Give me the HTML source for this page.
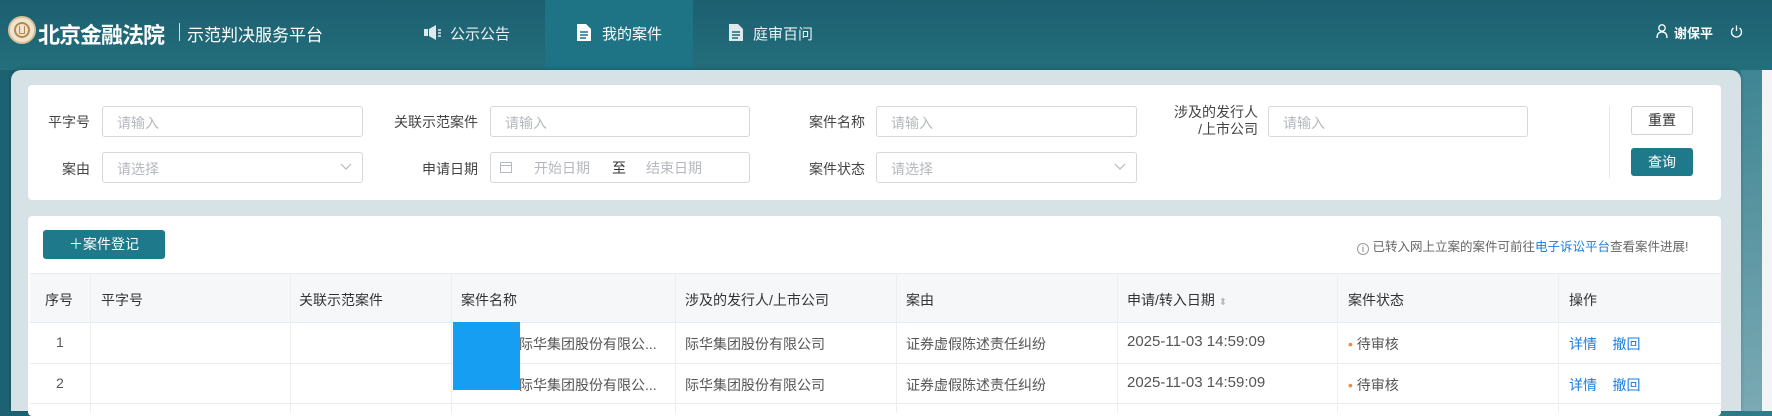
<!DOCTYPE html>
<html><head><meta charset="utf-8"><style>
*{margin:0;padding:0;box-sizing:border-box}
body{width:1772px;height:411px;overflow:hidden;font-family:"Liberation Sans","Noto Sans CJK SC",sans-serif;background:linear-gradient(90deg,#1c6272 0%,#236d7a 60%,#2e7c89 100%);position:relative;color:#333}
.abs{position:absolute}
.hdr{left:0;top:0;width:1772px;height:70px;background:linear-gradient(180deg,#1c5f70,#246f7c)}
.right{left:1741px;top:70px;width:31px;height:341px;background:linear-gradient(180deg,#3f8593,#7aaab4)}
.strip{left:1762px;top:70px;width:10px;height:341px;background:#f2f4f5}
.panel{left:11px;top:70px;width:1730px;height:341px;background:#d6e2e6;border-radius:10px 10px 0 0;box-shadow:0 -1px 4px rgba(0,0,0,.2)}
.card{background:#fff;border-radius:4px}
.lbl{font-size:14px;color:#444;text-align:right}
.inp{border:1px solid #d4d7dc;border-radius:3px;height:31px;font-size:14px;color:#b5b8be;padding:6px 14px;background:#fff}
.btn{border-radius:3px;font-size:14px;text-align:center}
.nav{color:#e8f1f3;font-size:15px}
.cell{position:absolute;font-size:14px;color:#555}
.hl{position:absolute;height:1px;background:#e8ebef}
.vl{position:absolute;width:1px;background:#eceef1}
.link{color:#1a7ee0}
</style></head><body>
<div class="abs hdr"></div>
<div class="abs right"></div>
<div class="abs strip"></div>
<div class="abs" style="left:8px;top:16px;width:28px;height:28px;border-radius:50%;background:#f1e4cf;border:2px solid #d9c09a"></div>
<div class="abs" style="left:14px;top:22px;width:16px;height:16px;border-radius:50%;border:2px solid #b48a50"></div>
<div class="abs" style="left:19px;top:26px;width:6px;height:8px;border:1.5px solid #b48a50;border-top:none"></div>
<div class="abs" style="left:38px;top:18px;font-size:22px;font-weight:bold;color:#fff;letter-spacing:-1px">北京金融法院</div>
<div class="abs" style="left:179px;top:23px;width:1px;height:18px;background:#cfe0e4"></div>
<div class="abs" style="left:187px;top:21px;font-size:17px;color:#fff">示范判决服务平台</div>
<div class="abs" style="left:545px;top:0;width:148px;height:70px;background:#1e7485"></div>
<svg class="abs" style="left:424px;top:25px" width="18" height="15" viewBox="0 0 18 15"><rect x="0" y="4" width="4" height="7" fill="#dfe9ec"/><path d="M5 4 L12 0 V15 L5 11Z" fill="#dfe9ec"/><path d="M14 5h3M14 8h3M14 11h3" stroke="#dfe9ec" stroke-width="1.5"/></svg>
<div class="abs nav" style="left:450px;top:23px">公示公告</div>
<svg class="abs" style="left:577px;top:24px" width="14" height="17" viewBox="0 0 14 17"><path d="M0 0h9l5 5v12H0z" fill="#fff"/><path d="M3 8h8M3 11h8M3 14h6" stroke="#1e7485" stroke-width="1.5"/></svg>
<div class="abs nav" style="left:602px;top:23px;color:#fff">我的案件</div>
<svg class="abs" style="left:729px;top:24px" width="14" height="17" viewBox="0 0 14 17"><path d="M0 0h9l5 5v12H0z" fill="#dfe9ec"/><path d="M3 8h8M3 11h8M3 14h6" stroke="#1f6a78" stroke-width="1.5"/></svg>
<div class="abs nav" style="left:753px;top:23px">庭审百问</div>
<svg class="abs" style="left:1656px;top:24px" width="12" height="14" viewBox="0 0 12 14"><circle cx="6" cy="4" r="3.2" fill="none" stroke="#fff" stroke-width="1.3"/><path d="M1 14 Q1 8 6 8 Q11 8 11 14" fill="none" stroke="#fff" stroke-width="1.3"/></svg>
<div class="abs" style="left:1674px;top:23px;font-size:13px;color:#fff;font-weight:bold">谢保平</div>
<svg class="abs" style="left:1730px;top:25px" width="13" height="13" viewBox="0 0 13 13"><path d="M3.5 3 A5 5 0 1 0 9.5 3" fill="none" stroke="#fff" stroke-width="1.3"/><path d="M6.5 0.5V6" stroke="#fff" stroke-width="1.3"/></svg>

<div class="abs panel"></div>
<div class="abs card" style="left:28px;top:85px;width:1693px;height:115px"></div>
<div class="abs lbl" style="left:20px;top:112px;width:70px">平字号</div>
<div class="abs inp" style="left:102px;top:106px;width:261px">请输入</div>
<div class="abs lbl" style="left:378px;top:112px;width:100px">关联示范案件</div>
<div class="abs inp" style="left:490px;top:106px;width:260px">请输入</div>
<div class="abs lbl" style="left:765px;top:112px;width:100px">案件名称</div>
<div class="abs inp" style="left:876px;top:106px;width:261px">请输入</div>
<div class="abs lbl" style="left:1158px;top:104px;width:100px;line-height:17px">涉及的发行人<br>/上市公司</div>
<div class="abs inp" style="left:1268px;top:106px;width:260px">请输入</div>
<div class="abs" style="left:1609px;top:106px;width:1px;height:72px;background:#e4e6e9"></div>
<div class="abs btn" style="left:1631px;top:106px;width:62px;height:29px;border:1px solid #cfd3d8;color:#333;line-height:27px">重置</div>
<div class="abs btn" style="left:1631px;top:148px;width:62px;height:28px;background:#1e7a8a;color:#fff;line-height:28px">查询</div>

<div class="abs lbl" style="left:20px;top:159px;width:70px">案由</div>
<div class="abs inp" style="left:102px;top:152px;width:261px">请选择</div>
<svg class="abs" style="left:340px;top:163px" width="12" height="8"><path d="M1 1l5 5 5-5" fill="none" stroke="#b5b8be" stroke-width="1.2"/></svg>
<div class="abs lbl" style="left:378px;top:159px;width:100px">申请日期</div>
<div class="abs inp" style="left:490px;top:152px;width:260px"></div>
<svg class="abs" style="left:500px;top:161px" width="12" height="12"><rect x="0.5" y="1.5" width="11" height="10" fill="none" stroke="#b5b8be"/><path d="M0.5 4.5h11" stroke="#b5b8be"/></svg>
<div class="abs" style="left:534px;top:158px;font-size:14px;color:#b5b8be">开始日期</div>
<div class="abs" style="left:612px;top:158px;font-size:14px;color:#333">至</div>
<div class="abs" style="left:646px;top:158px;font-size:14px;color:#b5b8be">结束日期</div>
<div class="abs lbl" style="left:765px;top:159px;width:100px">案件状态</div>
<div class="abs inp" style="left:876px;top:152px;width:261px">请选择</div>
<svg class="abs" style="left:1114px;top:163px" width="12" height="8"><path d="M1 1l5 5 5-5" fill="none" stroke="#b5b8be" stroke-width="1.2"/></svg>

<div class="abs card" style="left:28px;top:216px;width:1693px;height:200px"></div>
<div class="abs btn" style="left:43px;top:230px;width:122px;height:29px;background:#1e7a8a;color:#fff;line-height:29px;font-size:14px">＋案件登记</div>
<div class="abs" style="left:1357px;top:236px;font-size:12.5px;color:#666"><span style="display:inline-block;width:12px;height:12px;border:1px solid #999;border-radius:50%;font-size:9px;text-align:center;line-height:10px;vertical-align:-1px">i</span> 已转入网上立案的案件可前往<span class="link">电子诉讼平台</span>查看案件进展!</div>

<div class="abs" style="left:30px;top:273px;width:1691px;height:49px;background:#f5f7f9"></div>
<div class="hl" style="left:30px;top:273px;width:1691px"></div>
<div class="hl" style="left:30px;top:322px;width:1691px"></div>
<div class="hl" style="left:30px;top:363px;width:1691px"></div>
<div class="hl" style="left:30px;top:403px;width:1691px"></div>
<div class="vl" style="left:90px;top:273px;height:140px"></div>
<div class="vl" style="left:290px;top:273px;height:140px"></div>
<div class="vl" style="left:451px;top:273px;height:140px"></div>
<div class="vl" style="left:675px;top:273px;height:140px"></div>
<div class="vl" style="left:896px;top:273px;height:140px"></div>
<div class="vl" style="left:1117px;top:273px;height:140px"></div>
<div class="vl" style="left:1337px;top:273px;height:140px"></div>
<div class="vl" style="left:1558px;top:273px;height:140px"></div>

<div class="cell" style="left:45px;top:290px;color:#333">序号</div>
<div class="cell" style="left:101px;top:290px;color:#333">平字号</div>
<div class="cell" style="left:299px;top:290px;color:#333">关联示范案件</div>
<div class="cell" style="left:461px;top:290px;color:#333">案件名称</div>
<div class="cell" style="left:685px;top:290px;color:#333">涉及的发行人/上市公司</div>
<div class="cell" style="left:906px;top:290px;color:#333">案由</div>
<div class="cell" style="left:1127px;top:290px;color:#333">申请/转入日期 <span style="color:#bbb;font-size:10px">⬍</span></div>
<div class="cell" style="left:1348px;top:290px;color:#333">案件状态</div>
<div class="cell" style="left:1569px;top:290px;color:#333">操作</div>

<div class="cell" style="left:56px;top:334px">1</div>
<div class="cell" style="left:519px;top:334px">际华集团股份有限公...</div>
<div class="cell" style="left:685px;top:334px">际华集团股份有限公司</div>
<div class="cell" style="left:906px;top:334px">证券虚假陈述责任纠纷</div>
<div class="cell" style="left:1127px;top:333px;font-size:15px">2025-11-03 14:59:09</div>
<div class="cell" style="left:1348px;top:334px"><span style="color:#f08a3c">•</span> 待审核</div>
<div class="cell" style="left:1569px;top:334px;color:#1a7ee0">详情 &nbsp; &nbsp;撤回</div>

<div class="cell" style="left:56px;top:375px">2</div>
<div class="cell" style="left:519px;top:375px">际华集团股份有限公...</div>
<div class="cell" style="left:685px;top:375px">际华集团股份有限公司</div>
<div class="cell" style="left:906px;top:375px">证券虚假陈述责任纠纷</div>
<div class="cell" style="left:1127px;top:374px;font-size:15px">2025-11-03 14:59:09</div>
<div class="cell" style="left:1348px;top:375px"><span style="color:#f08a3c">•</span> 待审核</div>
<div class="cell" style="left:1569px;top:375px;color:#1a7ee0">详情 &nbsp; &nbsp;撤回</div>

<div class="abs" style="left:453px;top:322px;width:67px;height:68px;background:#169ff2"></div>
</body></html>
